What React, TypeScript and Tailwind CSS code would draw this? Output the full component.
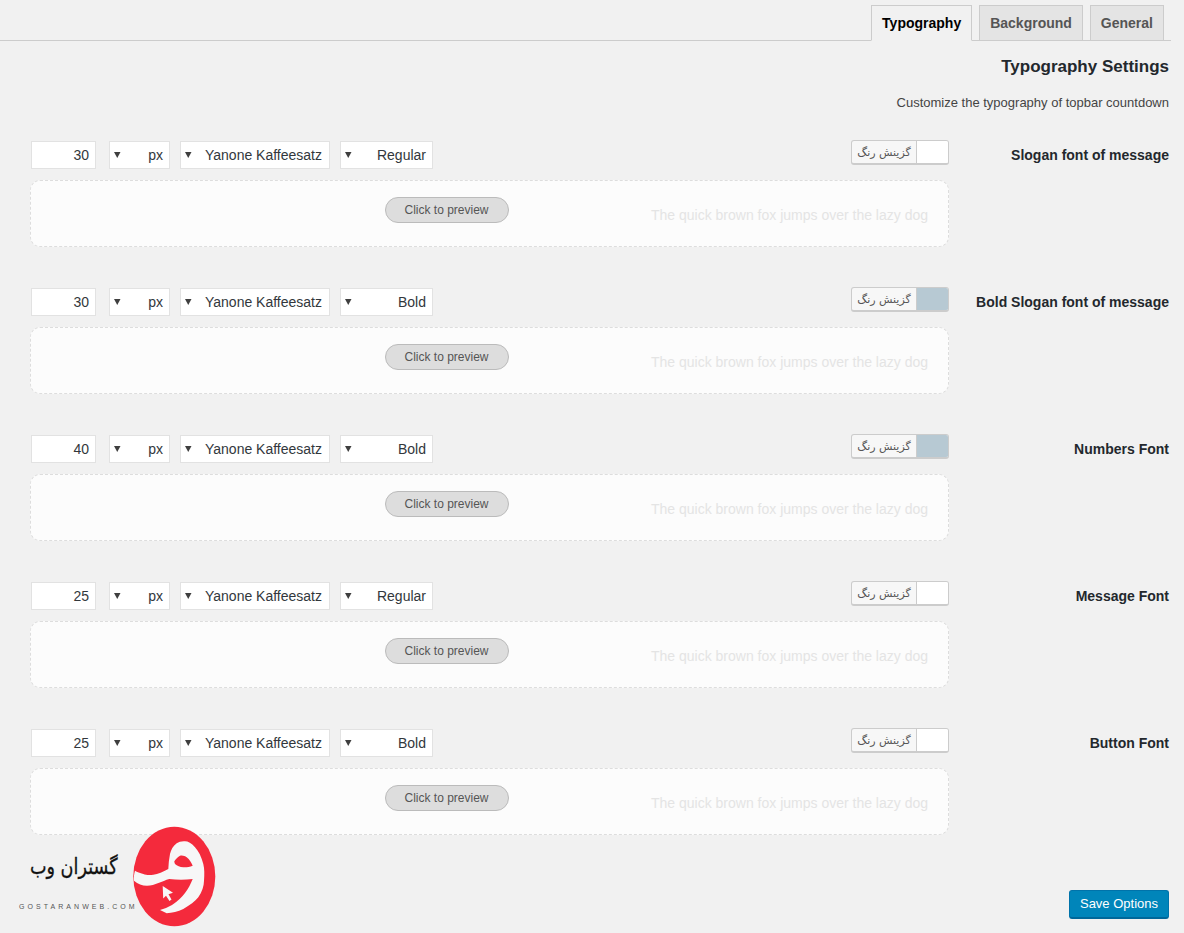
const rows = [
  { label: "Slogan font of message", size: "30", weight: "Regular", color: "bg-white" },
  { label: "Bold Slogan font of message", size: "30", weight: "Bold", color: "bg-[#b7c9d3]" },
  { label: "Numbers Font", size: "40", weight: "Bold", color: "bg-[#b7c9d3]" },
  { label: "Message Font", size: "25", weight: "Regular", color: "bg-white" },
  { label: "Button Font", size: "25", weight: "Bold", color: "bg-white" },
];

function Select({ text, className }: { text: string; className: string }) {
  return (
    <div className={`h-7 flex items-center justify-between bg-white border border-[#e2e2e2] pl-[4px] text-[14px] text-[#32373c] ${className}`}>
      <svg width="7" height="6" viewBox="0 0 7 6" className="shrink-0 -mt-px">
        <path d="M0 0h6.5L3.25 6z" fill="#3f3f3f" />
      </svg>
      <span>{text}</span>
    </div>
  );
}

function Row({ label, size, weight, color }: (typeof rows)[number]) {
  return (
    <section className="flex items-start h-[147px]">
      <div className="w-[919px] shrink-0">
        <div className="flex justify-between items-start h-[40px]">
          <div className="flex ml-px mt-px">
            <div className="w-[65px] h-7 flex items-center justify-end bg-white border border-[#e2e2e2] pr-[6px] text-[14px] text-[#32373c]">{size}</div>
            <Select text="px" className="w-[61px] ml-[13px] pr-[6px]" />
            <Select text="Yanone Kaffeesatz" className="w-[150px] ml-[10px] pr-[7px]" />
            <Select text={weight} className="w-[93px] ml-[10px] pr-[6px]" />
          </div>
          <div className="w-[98px] h-[25px] flex rounded-[3px] overflow-hidden border border-[#cccccc] border-b-2 bg-[#f7f7f7]">
            <div className="w-[65px] shrink-0 flex items-center justify-center pt-[2px] text-[11px] text-[#555555] border-r border-[#cccccc] font-['DejaVu_Sans',sans-serif]" dir="rtl">گزینش رنگ</div>
            <div className={`flex-1 ${color}`} />
          </div>
        </div>
        <div className="h-[67px] bg-[#fcfcfc] border border-dashed border-[#dddddd] rounded-[10px] relative">
          <div className="flex justify-center pt-4 pr-[85px]">
            <div className="w-[124px] h-[26px] flex items-center justify-center pr-px rounded-[13px] bg-[#dddddd] border border-[#bbbbbb] text-[12px] text-[#555555]">Click to preview</div>
          </div>
          <div className="absolute right-5 top-[25px] text-[14px] leading-[18px] text-[#e4e4e4]">The quick brown fox jumps over the lazy dog</div>
        </div>
      </div>
      <div className="flex-1 text-right text-[14px] font-bold text-[#23282d] pt-[5px] leading-[20px]">{label}</div>
    </section>
  );
}

function Logo() {
  return (
    <div className="absolute left-[18px] top-[826px] w-[200px] h-[102px]">
      <div className="absolute left-[13px] top-[24px] w-[86px] flex justify-center text-[22px] leading-[34px] text-[#111111] font-['DejaVu_Sans',sans-serif] whitespace-nowrap" dir="rtl">
        <span className="inline-block scale-x-[0.8] [-webkit-text-stroke:0.3px_#111111]">گستران وب</span>
      </div>
      <div className="absolute left-px top-[76px] text-[7px] leading-[10px] tracking-[3.05px] text-[#555555]">GOSTARANWEB.COM</div>
      <svg width="84" height="102" viewBox="0 0 84 102" className="absolute left-[115px] top-0">
        <ellipse cx="41.3" cy="50.5" rx="41" ry="49.7" fill="#f42a3c" />
        <path
          fillRule="evenodd"
          fill="#f7f7f7"
          d="M1 54.7 C5 58 9 59.7 14 59.7 C22 59.7 29 55 36.3 53 C44 54 52 54 59.7 53 C57.5 58 55.3 63 52 67 C49 71 45 75 39 79 C35 81 31 83 27 84 L33.7 87.3 C39 87 45 85.5 50.3 83 C57 79 62 75.5 65.3 71.3 C69 66 71 60 71 54.7 C71.5 48 71.5 43 70.3 38 C68.5 31 65.5 25 62 21.3 C58.5 17 55 15.3 52 15.3 C48.5 15 46 16 43.7 17.3 C40 20 38 24 37 28 C36 33 35.5 38 35.3 43 C30 46 25 48 20.3 48.7 C16 49.5 13 49 10.3 48 C7 47 4 46 2 44.7 C1 48 0.7 51 1 54.7 Z M41.3 35.3 C43 33 45 30.5 47 29.7 C49.5 29 52 30 53.7 31.3 C56.5 33.5 58.5 37 59.7 39.7 C56.5 41 53.5 41.5 50.3 41.3 C47 41 44 40 42 38 C41.5 37 41.3 36 41.3 35.3 Z"
        />
        <path d="M29.7 60 L30.2 72.5 L33 69.8 L36.5 75 L38.5 73.5 L35.5 68.3 L40 66.8 Z" fill="#f7f7f7" />
      </svg>
    </div>
  );
}

export default function App() {
  return (
    <div className="relative w-[1184px] h-[933px] overflow-hidden bg-[#f1f1f1] font-['Liberation_Sans',Arial,sans-serif]">
      <nav className="h-[41px] w-[1171px] border-b border-[#cccccc] flex justify-end items-end pr-[7px] gap-[7px] text-[14px] font-bold">
        <div className="h-9 -mb-px px-[10px] border border-[#cccccc] border-b-[#f1f1f1] bg-[#f1f1f1] text-[#000000] flex items-center">Typography</div>
        <div className="h-[35px] px-[10px] border border-[#cccccc] border-b-0 bg-[#e4e4e4] text-[#555555] flex items-center">Background</div>
        <div className="h-[35px] px-[10px] border border-[#cccccc] border-b-0 bg-[#e4e4e4] text-[#555555] flex items-center">General</div>
      </nav>
      <main className="pl-[30px] pr-[15px]">
        <h2 className="text-right text-[17px] leading-[22px] font-bold text-[#23282d] mt-[15px]">Typography Settings</h2>
        <p className="text-right text-[13px] leading-[20px] text-[#444444] mt-[15px] mb-[27px]">Customize the typography of topbar countdown</p>
        {rows.map((r) => (
          <Row key={r.label} {...r} />
        ))}
        <div className="flex justify-end mt-[15px]">
          <button className="w-[100px] h-[29px] rounded-[3px] bg-[#0085ba] border border-[#0073aa] border-b-2 border-b-[#006799] text-[13px] text-white">Save Options</button>
        </div>
      </main>
      <Logo />
    </div>
  );
}
